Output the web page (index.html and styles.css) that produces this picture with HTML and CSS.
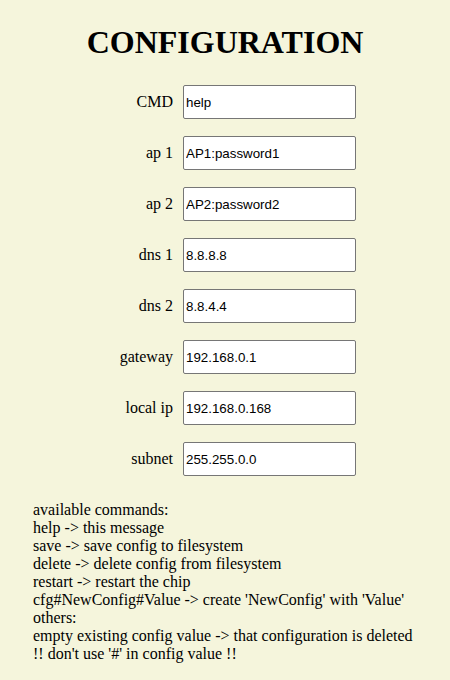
FILE: index.html
```html
<!DOCTYPE html>
<html>
<head>
<meta charset="utf-8">
<link rel="stylesheet" href="styles.css">
</head>
<body>
<h1 class="title">CONFIGURATION</h1>
<form class="cfg">
  <label class="lbl" for="cmd">CMD</label><input class="fld" id="cmd" type="text" value="help">
  <label class="lbl" for="ap1">ap 1</label><input class="fld" id="ap1" type="text" value="AP1:password1">
  <label class="lbl" for="ap2">ap 2</label><input class="fld" id="ap2" type="text" value="AP2:password2">
  <label class="lbl" for="dns1">dns 1</label><input class="fld" id="dns1" type="text" value="8.8.8.8">
  <label class="lbl" for="dns2">dns 2</label><input class="fld" id="dns2" type="text" value="8.8.4.4">
  <label class="lbl" for="gw">gateway</label><input class="fld" id="gw" type="text" value="192.168.0.1">
  <label class="lbl" for="ip">local ip</label><input class="fld" id="ip" type="text" value="192.168.0.168">
  <label class="lbl" for="sn">subnet</label><input class="fld" id="sn" type="text" value="255.255.0.0">
</form>
<div class="help">
available commands:<br>
help -&gt; this message<br>
save -&gt; save config to filesystem<br>
delete -&gt; delete config from filesystem<br>
restart -&gt; restart the chip<br>
cfg#NewConfig#Value -&gt; create 'NewConfig' with 'Value'<br>
others:<br>
empty existing config value -&gt; that configuration is deleted<br>
!! don't use '#' in config value !!
</div>
</body>
</html>
```
FILE: styles.css
```css
html, body {
  margin: 0;
  padding: 0;
}
body {
  background: #f5f5dc;
  font-family: "Liberation Serif", "Times New Roman", serif;
  font-size: 16px;
  color: #000;
}
.title {
  margin: 0;
  padding-top: 24px;
  font-size: 32px;
  font-weight: bold;
  text-align: center;
  line-height: 37px;
}
.cfg {
  display: grid;
  grid-template-columns: 173px 173px;
  column-gap: 10px;
  row-gap: 17px;
  margin-top: 24px;
  align-items: center;
}
.lbl {
  text-align: right;
}
.fld {
  box-sizing: border-box;
  height: 34px;
  width: 173px;
  margin: 0;
  padding: 0 2px;
  border: 1px solid #767676;
  border-radius: 2px;
  background: #fff;
  font-family: "Liberation Sans", Arial, sans-serif;
  font-size: 13.33px;
  color: #000;
}
.help {
  margin-top: 25px;
  padding-left: 33px;
  line-height: 18px;
}
```
